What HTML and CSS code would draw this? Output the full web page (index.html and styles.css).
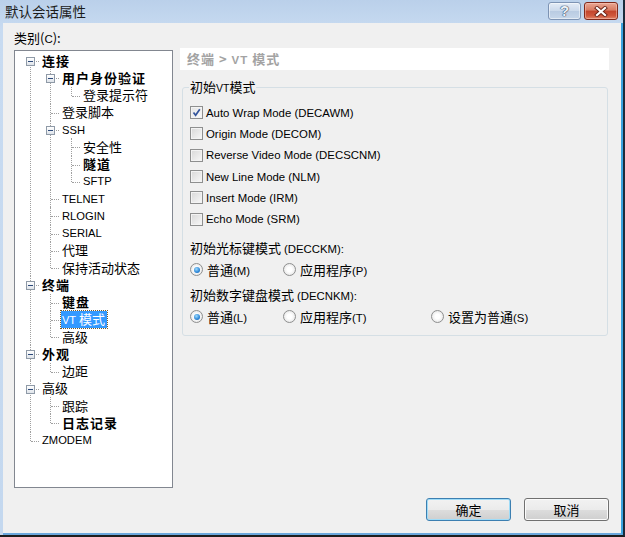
FILE: index.html
```html
<!DOCTYPE html>
<html lang="zh-CN">
<head>
<meta charset="utf-8">
<title>默认会话属性</title>
<link rel="stylesheet" href="styles.css">
</head>
<body>
<div class="window">
  <div class="titlebar">
    <div class="title">默认会话属性</div>
    <div class="caption-btns">
      <div class="cbtn help"><span>?</span></div>
      <div class="cbtn close">
        <svg width="14" height="11" viewBox="0 0 14 11">
          <path d="M3 2 L11 9 M11 2 L3 9" stroke="#6b2418" stroke-width="4" stroke-linecap="square" fill="none"/>
          <path d="M3 2 L11 9 M11 2 L3 9" stroke="#ffffff" stroke-width="2.2" stroke-linecap="square" fill="none"/>
        </svg>
      </div>
    </div>
  </div>
  <div class="client">
    <div class="main">
      <div class="left">
        <div class="cat-label">类别(<span class="en">C</span>):</div>
        <div class="tree">
          <ul class="l0">
            <li><div class="row"><span class="exp"></span><span class="lbl b">连接</span></div>
              <ul class="l1">
                <li><div class="row"><span class="exp"></span><span class="lbl b">用户身份验证</span></div>
                  <ul class="l2">
                    <li><div class="row"><span class="lbl">登录提示符</span></div></li>
                  </ul>
                </li>
                <li><div class="row"><span class="lbl">登录脚本</span></div></li>
                <li><div class="row"><span class="exp"></span><span class="lbl en">SSH</span></div>
                  <ul class="l2">
                    <li><div class="row"><span class="lbl">安全性</span></div></li>
                    <li><div class="row"><span class="lbl b">隧道</span></div></li>
                    <li><div class="row"><span class="lbl en">SFTP</span></div></li>
                  </ul>
                </li>
                <li><div class="row"><span class="lbl en">TELNET</span></div></li>
                <li><div class="row"><span class="lbl en">RLOGIN</span></div></li>
                <li><div class="row"><span class="lbl en">SERIAL</span></div></li>
                <li><div class="row"><span class="lbl">代理</span></div></li>
                <li><div class="row"><span class="lbl">保持活动状态</span></div></li>
              </ul>
            </li>
            <li><div class="row"><span class="exp"></span><span class="lbl b">终端</span></div>
              <ul class="l1">
                <li><div class="row"><span class="lbl b">键盘</span></div></li>
                <li><div class="row"><span class="lbl sel"><span class="en">VT</span> 模式</span></div></li>
                <li><div class="row"><span class="lbl">高级</span></div></li>
              </ul>
            </li>
            <li><div class="row"><span class="exp"></span><span class="lbl b">外观</span></div>
              <ul class="l1">
                <li><div class="row"><span class="lbl">边距</span></div></li>
              </ul>
            </li>
            <li><div class="row"><span class="exp"></span><span class="lbl">高级</span></div>
              <ul class="l1">
                <li><div class="row"><span class="lbl">跟踪</span></div></li>
                <li><div class="row"><span class="lbl b">日志记录</span></div></li>
              </ul>
            </li>
            <li><div class="row"><span class="lbl en">ZMODEM</span></div></li>
          </ul>
        </div>
      </div>
      <div class="right">
        <div class="crumb">终端 &gt; <span class="en">VT</span> 模式</div>
        <fieldset class="group">
          <legend>初始<span class="en">VT</span>模式</legend>
          <div class="check-row"><span class="cb checked"><svg width="11" height="11" viewBox="0 0 11 11"><path d="M2.5 5.5 L4.6 8.2 L8.8 2.2" stroke="#34559c" stroke-width="1.7" fill="none"/></svg></span><span class="en lab">Auto Wrap Mode (DECAWM)</span></div>
          <div class="check-row"><span class="cb"></span><span class="en lab">Origin Mode (DECOM)</span></div>
          <div class="check-row"><span class="cb"></span><span class="en lab">Reverse Video Mode (DECSCNM)</span></div>
          <div class="check-row"><span class="cb"></span><span class="en lab">New Line Mode (NLM)</span></div>
          <div class="check-row"><span class="cb"></span><span class="en lab">Insert Mode (IRM)</span></div>
          <div class="check-row"><span class="cb"></span><span class="en lab">Echo Mode (SRM)</span></div>

          <div class="sec-label first">初始光标键模式 <span class="en">(DECCKM):</span></div>
          <div class="radio-row">
            <div class="radio-item"><span class="rb on"></span><span>普通<span class="en">(M)</span></span></div>
            <div class="radio-item"><span class="rb"></span><span>应用程序<span class="en">(P)</span></span></div>
          </div>
          <div class="sec-label">初始数字键盘模式 <span class="en">(DECNKM):</span></div>
          <div class="radio-row">
            <div class="radio-item"><span class="rb on"></span><span>普通<span class="en">(L)</span></span></div>
            <div class="radio-item"><span class="rb"></span><span>应用程序<span class="en">(T)</span></span></div>
            <div class="radio-item"><span class="rb"></span><span>设置为普通<span class="en">(S)</span></span></div>
          </div>
        </fieldset>
      </div>
    </div>
    <div class="footer">
      <button class="btn default">确定</button>
      <button class="btn">取消</button>
    </div>
  </div>
</div>
</body>
</html>
```
FILE: styles.css
```css
* { box-sizing: border-box; }
html, body { margin: 0; padding: 0; }
body {
  width: 625px;
  height: 537px;
  overflow: hidden;
  font-family: "Noto Sans CJK SC", "Liberation Sans", sans-serif;
  font-size: 13px;
  color: #000;
  background: #c4d8ef;
}
.en { font-family: "Liberation Sans", Arial, sans-serif; font-size: 11px; }

.window {
  width: 625px;
  height: 537px;
  display: flex;
  flex-direction: column;
  background: linear-gradient(#bad0ea, #c8dbf1 30px, #c4d8ef);
  padding-left: 3px;
  border-right: 2px solid #1c2b3b;
  border-bottom: 2px solid #1d1d1d;
}

/* title bar */
.titlebar {
  height: 23px;
  display: flex;
  align-items: flex-start;
  justify-content: space-between;
}
.title {
  padding-left: 2px;
  line-height: 23px;
  font-size: 13.5px;
  color: #1b1b1b;
}
.caption-btns {
  display: flex;
  gap: 3px;
  padding-top: 2px;
  padding-right: 5px;
}
.cbtn {
  height: 18px;
  border-radius: 3px;
  display: flex;
  align-items: center;
  justify-content: center;
}
.help {
  width: 33px;
  border: 1px solid #7d93b3;
  background: linear-gradient(#e4ecf6, #cbd9eb 50%, #b9cbe2 51%, #c7d7ea);
  box-shadow: inset 0 0 0 1px rgba(255,255,255,0.5);
}
.help span {
  font-family: "Liberation Sans", sans-serif;
  font-weight: bold;
  font-size: 15px;
  line-height: 16px;
  color: #eef2f7;
  text-shadow: 0 0 1px #2e4260, 0 0 1px #2e4260, 0 0 1px #2e4260;
}
.close {
  width: 34px;
  border: 1px solid #80291b;
  background: linear-gradient(#e9a794, #d87a62 45%, #c2452c 50%, #d0583d 80%, #e0876b);
  box-shadow: inset 0 0 0 1px rgba(255,210,200,0.45);
}

/* client */
.client {
  flex: 1;
  display: flex;
  flex-direction: column;
  background: #f0f0f0;
  padding: 7px 12px 12px 11px;
  border-right: 2px solid #3aa3e0;
  border-bottom: 2px solid #6ba7dc;
}
.main {
  display: flex;
  gap: 7px;
  align-items: flex-start;
}
.left { width: 159px; }
.cat-label {
  line-height: 16px;
  height: 20px;
}
.cat-label .en { font-size: 11.5px; }

/* tree */
.tree {
  height: 438px;
  background: #fff;
  border: 1px solid #828790;
  padding-top: 1px;
}
.tree ul { list-style: none; margin: 0; padding: 0; }
.l0 { --x: 15px; }
.l1 { --x: 35px; }
.l2 { --x: 56px; }
.tree li { position: relative; }
.tree li::before {
  content: "";
  position: absolute;
  left: var(--x);
  top: 0;
  bottom: 0;
  border-left: 1px dotted #a0a0a0;
}
.tree li:last-child::before { bottom: auto; height: 9px; }
.l0 > li:first-child::before { top: 9px; }
.tree li::after {
  content: "";
  position: absolute;
  left: calc(var(--x) + 1px);
  top: 9px;
  width: 8px;
  border-top: 1px dotted #a0a0a0;
}
.row {
  height: 17.25px;
  display: flex;
  align-items: center;
  padding-left: calc(var(--x) + 12px);
  white-space: nowrap;
}
.exp {
  position: absolute;
  z-index: 1;
  left: calc(var(--x) - 4px);
  top: 5px;
  width: 9px;
  height: 9px;
  border: 1px solid #8f9aa7;
  background: linear-gradient(#ffffff, #dfe4ea);
}
.exp::after {
  content: "";
  position: absolute;
  left: 1px;
  top: 3px;
  width: 5px;
  height: 1px;
  background: #2d4a7a;
}
.lbl { line-height: 16px; display: inline-block; }
.lbl.en { font-size: 11.2px; }
.lbl.b { font-weight: bold; letter-spacing: 1px; }
.lbl.sel {
  background: #3399ff;
  color: #fff;
  outline: 1px dotted #7a5b2a;
  padding: 0 2px 0 1px;
  margin-left: -1px;
}

/* right panel */
.right { flex: 1; margin-top: 18px; }
.crumb {
  height: 22px;
  line-height: 22px;
  background: #fff;
  padding-left: 7px;
  color: #a3a3a3;
  font-weight: bold;
  letter-spacing: 1px;
}
.crumb .en { font-size: 11.5px; }
.group {
  margin: 9px 1px 0 2px;
  border: 1px solid #d5dfe5;
  border-radius: 3px;
  padding: 6px 8px 8px 7px;
  min-width: 0;
}
.group legend {
  padding: 0 1px;
  margin-left: -1px;
  line-height: 16px;
}
.group legend .en { font-size: 10.5px; }
.check-row {
  height: 21.33px;
  display: flex;
  align-items: center;
}
.lab { font-size: 11.4px; }
.cb {
  width: 13px;
  height: 13px;
  margin-right: 3px;
  border: 1px solid #8e8f8f;
  background: linear-gradient(135deg, #d8d8d8, #f8f8f8);
  box-shadow: inset 0 0 0 1px #f3f3f3;
  display: flex;
  align-items: center;
  justify-content: center;
}
.cb.checked { background: linear-gradient(135deg, #e3e3e3, #fbfbfb); }
.sec-label {
  line-height: 16px;
  margin-top: 7px;
  margin-bottom: 3px;
}
.sec-label.first { margin-top: 10px; }
.sec-label .en { font-size: 11.4px; }
.radio-row {
  height: 20px;
  display: grid;
  grid-template-columns: 93px 148px 1fr;
  align-items: center;
}
.radio-item { display: flex; align-items: center; white-space: nowrap; }
.radio-item .en { font-size: 11.4px; }
.rb {
  width: 13px;
  height: 13px;
  margin-right: 4px;
  border-radius: 50%;
  border: 1px solid #8e8f8f;
  background: radial-gradient(circle at 50% 50%, #ffffff 30%, #dcdcdc);
  position: relative;
}
.rb.on::after {
  content: "";
  position: absolute;
  left: 2.5px;
  top: 2.5px;
  width: 6px;
  height: 6px;
  border-radius: 50%;
  background: radial-gradient(circle at 40% 35%, #9fdcff, #2c86d6 60%, #1756a6);
}

/* footer */
.footer {
  margin-top: 10px;
  display: flex;
  justify-content: flex-end;
  gap: 13px;
}
.btn {
  width: 85px;
  height: 23px;
  font-family: "Noto Sans CJK SC", sans-serif;
  font-size: 13px;
  color: #000;
  border: 1px solid #707070;
  border-radius: 3px;
  background: linear-gradient(#f2f2f2, #ebebeb 50%, #dddddd 51%, #cfcfcf);
  box-shadow: inset 0 0 0 1px #fbfbfb;
  padding: 0;
  line-height: 20px;
}
.btn.default {
  border-color: #3c7fb1;
  box-shadow: inset 0 0 0 1px #9fdcf8;
}
```
